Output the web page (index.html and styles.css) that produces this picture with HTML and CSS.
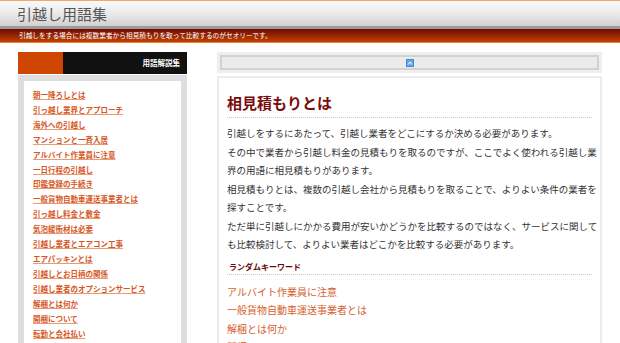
FILE: index.html
```html
<!DOCTYPE html>
<html>
<head>
	<meta charset="utf-8">
	<title>引越し用語集</title>
	<link rel="stylesheet" href="styles.css">
</head>
<body>
	<div class="header">
		<h1 class="site-title">引越し用語集</h1>
	</div>
	<div class="tagline">
		<p>引越しをする場合には複数業者から相見積もりを取って比較するのがセオリーです。</p>
	</div>

	<div class="wrap">
		<div class="side">
			<div class="side-head">
				<span class="side-tab"></span>
				<span class="side-title">用語解説集</span>
			</div>
			<div class="side-box">
				<ul class="side-list">
					<li><a href="#">朝一降ろしとは</a></li>
					<li><a href="#">引っ越し業界とアプローチ</a></li>
					<li><a href="#">海外への引越し</a></li>
					<li><a href="#">マンションと一斉入居</a></li>
					<li><a href="#">アルバイト作業員に注意</a></li>
					<li><a href="#">一日行程の引越し</a></li>
					<li><a href="#">印鑑登録の手続き</a></li>
					<li><a href="#">一般貨物自動車運送事業者とは</a></li>
					<li><a href="#">引っ越し料金と敷金</a></li>
					<li><a href="#">気泡緩衝材は必要</a></li>
					<li><a href="#">引越し業者とエアコン工事</a></li>
					<li><a href="#">エアパッキンとは</a></li>
					<li><a href="#">引越しとお日柄の関係</a></li>
					<li><a href="#">引越し業者のオプションサービス</a></li>
					<li><a href="#">解梱とは何か</a></li>
					<li><a href="#">開梱について</a></li>
					<li><a href="#">転勤と会社払い</a></li>
				</ul>
			</div>
		</div>

		<div class="main">
			<div class="ad-bar">
				<div class="ad-inner">
					<svg class="ad-icon" width="8" height="8" viewBox="0 0 8 8">
						<rect x="0" y="0" width="8" height="8" fill="#3f86d6"/>
						<rect x="1" y="1" width="6" height="6" fill="#6aa8e8"/>
						<path d="M2 5.5 L4 3 L6 5.5" stroke="#ffffff" stroke-width="1" fill="none"/>
					</svg>
				</div>
			</div>

			<div class="entry">
				<h2 class="entry-title">相見積もりとは</h2>
				<p class="entry-text">
					引越しをするにあたって、引越し業者をどこにするか決める必要があります。<br>
					その中で業者から引越し料金の見積もりを取るのですが、ここでよく使われる引越し業界の用語に相見積もりがあります。<br>
					相見積もりとは、複数の引越し会社から見積もりを取ることで、よりよい条件の業者を探すことです。<br>
					ただ単に引越しにかかる費用が安いかどうかを比較するのではなく、サービスに関しても比較検討して、よりよい業者はどこかを比較する必要があります。
				</p>

				<h3 class="random-title">ランダムキーワード</h3>
				<ul class="random-list">
					<li><a href="#">アルバイト作業員に注意</a></li>
					<li><a href="#">一般貨物自動車運送事業者とは</a></li>
					<li><a href="#">解梱とは何か</a></li>
					<li><a href="#">開梱について</a></li>
				</ul>
			</div>
		</div>
	</div>
</body>
</html>
```

FILE: styles.css
```css
body{
	margin:0;
	background-color:#ffffff;
	font-family:"Noto Sans CJK JP", sans-serif;
	color:#333;
	overflow:hidden;
}
ul{
	list-style:none;
	margin:0;
	padding:0;
}

/* header */
.header{
	height:25px;
	border-top:1px solid #f4a868;
	background:linear-gradient(#fbfbfb, #e6e6e6 60%, #d0d0d0);
	border-bottom:3px solid #9c9c9c;
}
.site-title{
	margin:0;
	padding-left:17px;
	font-size:15px;
	font-weight:normal;
	line-height:26px;
	color:#555;
}
.tagline{
	height:13px;
	background:linear-gradient(#6e0a02, #a02a02 60%, #c04400);
	border-bottom:1px solid #e8803a;
}
.tagline p{
	margin:0;
	padding-left:19px;
	font-size:6.7px;
	line-height:13px;
	color:#fff;
}

/* layout */
.wrap{
	display:flex;
	gap:30px;
	margin:9px 0 0 18px;
	width:584px;
}

/* side */
.side{
	width:169px;
	flex:none;
}
.side-head{
	display:flex;
	height:22px;
	background-color:#111;
}
.side-tab{
	width:45px;
	background-color:#cf4600;
}
.side-title{
	flex:1;
	text-align:right;
	padding-right:7px;
	font-size:7.5px;
	font-weight:bold;
	line-height:22px;
	color:#fff;
}
.side-box{
	margin-top:1px;
	border:6px solid #dedede;
	border-bottom:0;
	background-color:#fff;
	padding:7px 0 40px 9px;
}
.side-list li{
	line-height:14.9px;
	font-size:7.5px;
	font-weight:bold;
}
.side-list a{
	color:#d6561e;
	text-decoration:underline;
	text-decoration-color:#ec9a70;
}

/* main */
.main{
	flex:1;
}
.ad-bar{
	background-color:#eeeeee;
	padding:3px;
}
.ad-inner{
	height:11px;
	border:2px solid #d2d2d2;
	background-color:#ebebeb;
	display:flex;
	justify-content:center;
	align-items:center;
}
.ad-icon{
	display:block;
}
.entry{
	margin-top:3px;
	border:2px solid #ececec;
	border-bottom:0;
	padding:15px 1px 20px 8px;
	height:400px;
}
.entry-title{
	margin:0 7px 0 0;
	padding-bottom:4px;
	border-bottom:1px dotted #c8c8c8;
	font-size:15px;
	line-height:20px;
	color:#7a0c0c;
}
.entry-text{
	margin:6px 0 0 0;
	font-size:9.5px;
	line-height:18.5px;
	color:#333;
}
.random-title{
	margin:6px 7px 0 0;
	padding-left:2px;
	border-bottom:1px dotted #c8c8c8;
	font-size:8px;
	line-height:14px;
	color:#6a0a0a;
}
.random-list{
	margin-top:8px;
}
.random-list li{
	font-size:10px;
	line-height:18.5px;
}
.random-list a{
	color:#d6602e;
	text-decoration:none;
}
```
